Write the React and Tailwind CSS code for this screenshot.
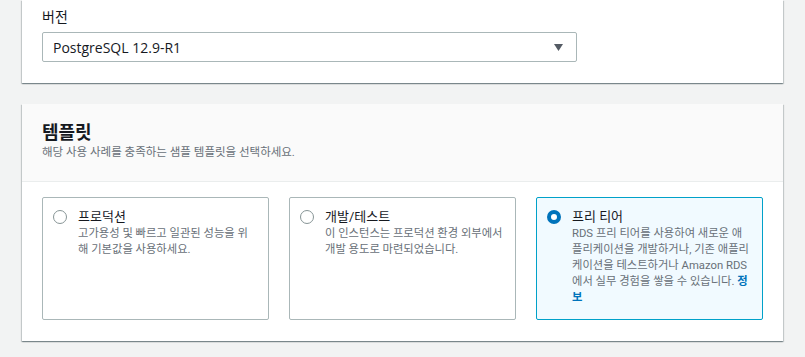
import React from "react";

// Line breaks follow the reference wrapping
const tiles = [
  {
    id: "prod",
    title: "프로덕션",
    lines: ["고가용성 및 빠르고 일관된 성능을 위", "해 기본값을 사용하세요."],
  },
  {
    id: "dev",
    title: "개발/테스트",
    lines: ["이 인스턴스는 프로덕션 환경 외부에서", "개발 용도로 마련되었습니다."],
  },
  {
    id: "free",
    title: "프리 티어",
    lines: [
      "RDS 프리 티어를 사용하여 새로운 애",
      "플리케이션을 개발하거나, 기존 애플리",
      "케이션을 테스트하거나 Amazon RDS",
      "에서 실무 경험을 쌓을 수 있습니다.",
    ],
    info: true,
  },
];

const Radio = ({ checked }) =>
  checked ? (
    <span className="mt-[2px] block h-[14px] w-[14px] shrink-0 rounded-full border-[4px] border-[#0073bb] bg-white" />
  ) : (
    <span className="mt-[2px] block h-[14px] w-[14px] shrink-0 rounded-full border border-[#879596] bg-white" />
  );

const Tile = ({ tile, selected }) => (
  <div
    className={`flex gap-[11px] rounded-[2px] border pt-[10px] pb-[13px] pl-[10px] pr-[6px] ${
      selected ? "border-[#00a1c9] bg-[#f1faff]" : "border-[#aab7b8] bg-white"
    }`}
  >
    <Radio checked={selected} />
    <div className="min-w-0 flex-1">
      <div className="text-[13px] leading-[18px] text-[#16191f]">{tile.title}</div>
      <div className="text-[11.3px] leading-[16px] text-[#687078]">
        {tile.lines.map((l, i) => (
          <div key={i} className="whitespace-nowrap">
            {l}
            {tile.info && i === tile.lines.length - 1 && (
              <>
                {" "}
                <span className="font-bold text-[#0073bb]">정</span>
              </>
            )}
          </div>
        ))}
        {tile.info && <div className="font-bold text-[#0073bb]">보</div>}
      </div>
    </div>
  </div>
);

export default function App() {
  return (
    <div className="min-h-[357px] w-full overflow-hidden bg-[#f2f3f3] px-[22px] font-[family-name:Roboto,'Noto_Sans_CJK_KR',sans-serif]">
      {/* Version card */}
      <div className="bg-white px-5 pt-[7px] pb-[21px] shadow-[0_1px_1px_0_rgba(0,28,36,0.3),1px_1px_1px_0_rgba(0,28,36,0.15),-1px_1px_1px_0_rgba(0,28,36,0.15)]">
        <div className="mb-[5px] text-[14px] leading-[20px] text-[#16191f]">버전</div>
        <div className="flex h-[30px] w-[535px] items-center justify-between rounded-[2px] border border-[#aab7b8] bg-white pl-[10px] pr-[13px]">
          <span className="font-[family-name:'Open_Sans','Noto_Sans_CJK_KR',sans-serif] text-[14px] text-[#16191f]">
            PostgreSQL 12.9-R1
          </span>
          <svg width="9" height="7" viewBox="0 0 9 7">
            <polygon points="0,0 9,0 4.5,7" fill="#545b64" />
          </svg>
        </div>
      </div>

      {/* Template card */}
      <div className="mt-[21px] bg-white shadow-[0_1px_1px_0_rgba(0,28,36,0.3),1px_1px_1px_0_rgba(0,28,36,0.15),-1px_1px_1px_0_rgba(0,28,36,0.15)]">
        <div className="border-b border-[#eaeded] bg-[#fafafa] px-5 pt-[17px] pb-[21px]">
          <h2 className="text-[18px] font-bold leading-[23px] text-[#16191f]">템플릿</h2>
          <p className="text-[11.5px] leading-[16px] text-[#687078]">
            해당 사용 사례를 충족하는 샘플 템플릿을 선택하세요.
          </p>
        </div>
        <div className="grid grid-cols-3 gap-5 px-5 pt-[15px] pb-[21px]">
          {tiles.map((t) => (
            <Tile key={t.id} tile={t} selected={t.id === "free"} />
          ))}
        </div>
      </div>
    </div>
  );
}
